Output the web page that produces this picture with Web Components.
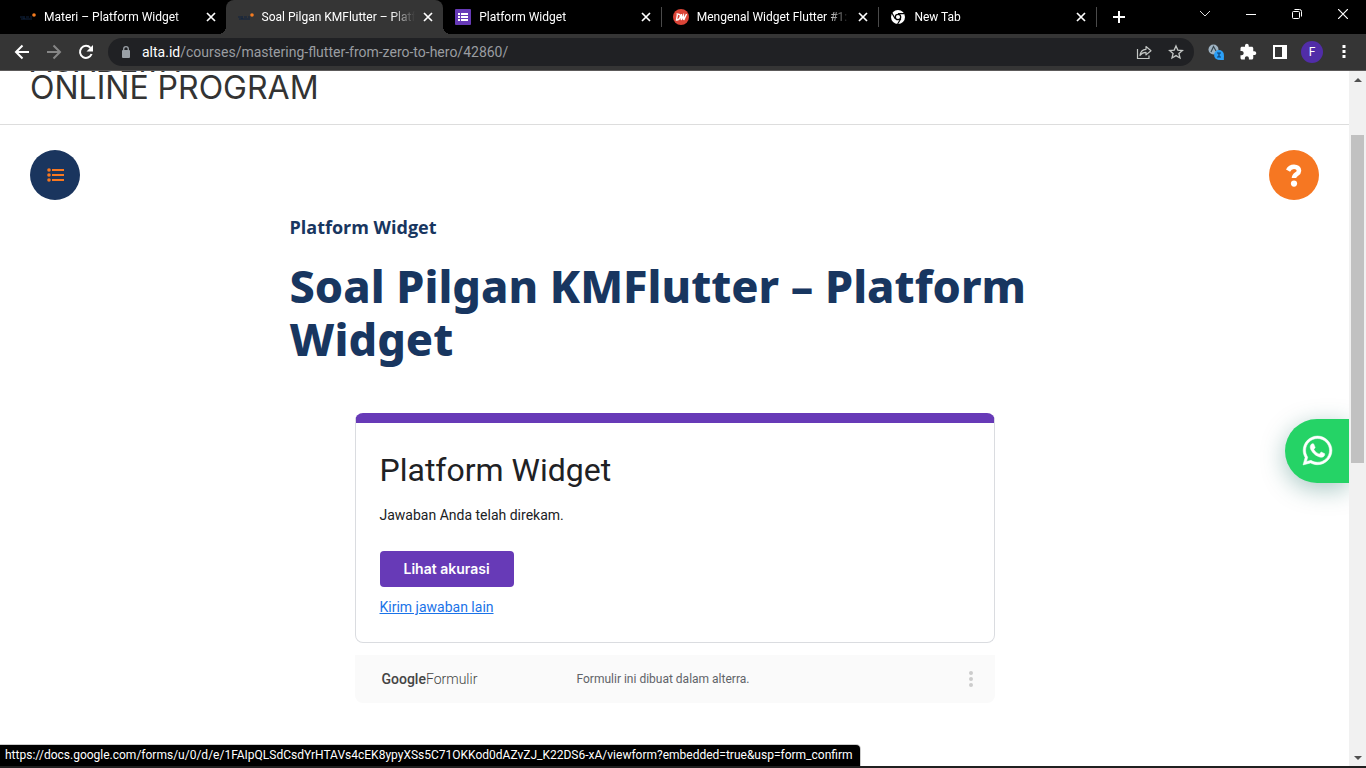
<!DOCTYPE html>
<html lang="id">
<head>
<meta charset="utf-8">
<title>Soal Pilgan KMFlutter – Platform Widget</title>
<style>
  html, body { margin: 0; height: 100%; overflow: hidden; }
  body { font-family: "Open Sans", "Noto Sans", sans-serif; background: #fff; }
</style>
</head>
<body>
<browser-window>
  <tab-strip slot="tabs">
    <browser-tab icon="alta">Materi – Platform Widget</browser-tab>
    <browser-tab icon="alta" active>Soal Pilgan KMFlutter – Platform Widget</browser-tab>
    <browser-tab icon="form">Platform Widget</browser-tab>
    <browser-tab icon="dw" divider>Mengenal Widget Flutter #1: Widget</browser-tab>
    <browser-tab icon="chrome" divider>New Tab</browser-tab>
  </tab-strip>
  <nav-bar slot="toolbar" host="alta.id" path="/courses/mastering-flutter-from-zero-to-hero/42860/"></nav-bar>
  <course-page>
    <span slot="brand">ACADEMY<br>ONLINE PROGRAM</span>
    <span slot="topic">Platform Widget</span>
    <span slot="title">Soal Pilgan KMFlutter – Platform Widget</span>
    <form-card heading="Platform Widget">Jawaban Anda telah direkam.</form-card>
    <form-footer>Formulir ini dibuat dalam alterra.</form-footer>
  </course-page>
  <chat-bubble slot="overlay"></chat-bubble>
  <status-bubble slot="overlay">https://docs.google.com/forms/u/0/d/e/1FAIpQLSdCsdYrHTAVs4cEK8ypyXSs5C71OKKod0dAZvZJ_K22DS6-xA/viewform?embedded=true&amp;usp=form_confirm</status-bubble>
  <scroll-bar slot="scroll"></scroll-bar>
</browser-window>

<script>
const ICONS = {
  alta: '<svg width="16" height="16" viewBox="0 0 16 16"><path d="M0 8h3M4 7v3M6 8h3M10 8h2M1 10h11" stroke="#10233f" stroke-width="1.2" fill="none"/><circle cx="14" cy="6" r="1.8" fill="#f57c20"/></svg>',
  form: '<svg width="16" height="16" viewBox="0 0 16 16"><rect width="16" height="16" rx="1" fill="#673ab7"/><path d="M3 4h2v2H3zM6 4h7v2H6zM3 7h2v2H3zM6 7h7v2H6zM3 10h2v2H3zM6 10h7v2H6z" fill="#fff"/></svg>',
  dw: '<svg width="16" height="16" viewBox="0 0 16 16"><circle cx="8" cy="8" r="8" fill="#db4437"/><path d="M4.500 5L3.500 11C6 11 7 9 7.300 7.500C7.500 5.500 6.500 5 3.500 5M8.500 5L8.300 11L10.500 6.500L10.800 11L13.500 5" stroke="#fff" stroke-width="1.400" fill="none"/></svg>',
  chrome: '<svg width="16" height="16" viewBox="0 0 16 16"><circle cx="8" cy="8" r="7" fill="#fff"/><circle cx="8" cy="8" r="2.700" fill="#fff" stroke="#000" stroke-width="1.300"/><path d="M8 4.700h6.500M5.200 9.700L1.900 4M10.800 9.700L7.600 15" stroke="#000" stroke-width="1.200"/></svg>',
  close: '<svg width="10" height="10" viewBox="0 0 10 10"><path d="M1 1l8 8M9 1l-8 8" stroke="currentColor" stroke-width="1.700"/></svg>',
  plus: '<svg width="14" height="14" viewBox="0 0 14 14"><path d="M7 1v12M1 7h12" stroke="#fff" stroke-width="2"/></svg>',
  chevron: '<svg width="12" height="12" viewBox="0 0 12 12"><path d="M1 3l5 5 5-5" stroke="#ddd" fill="none"/></svg>',
  minimise: '<svg width="10" height="10" viewBox="0 0 10 10"><path d="M0 5.500h10" stroke="#fff"/></svg>',
  restore: '<svg width="10" height="10" viewBox="0 0 10 10"><rect x=".5" y="2.500" width="7" height="7" rx="1" fill="none" stroke="#fff"/><path d="M2.500 .5H7.500Q9.500 .5 9.500 2.500V7.500" fill="none" stroke="#fff"/></svg>',
  shut: '<svg width="10" height="10" viewBox="0 0 10 10"><path d="M0 0l10 10M10 0L0 10" stroke="#fff" stroke-width="1.200"/></svg>',
  back: '<svg width="16" height="16" viewBox="0 0 16 16"><path d="M15 8H2M8.500 1.500L2 8l6.500 6.500" stroke="currentColor" stroke-width="2" fill="none"/></svg>',
  forward: '<svg width="16" height="16" viewBox="0 0 16 16"><path d="M1 8h13M7.500 1.500L14 8l-6.500 6.500" stroke="currentColor" stroke-width="2" fill="none"/></svg>',
  reload: '<svg width="16" height="16" viewBox="0 0 16 16"><path d="M13.600 10A6 6 0 1 1 12.500 3.900" stroke="currentColor" stroke-width="2" fill="none"/><path d="M15 1v6.500H8.500z" fill="currentColor"/></svg>',
  lock: '<svg width="10" height="12" viewBox="0 0 10 12"><rect x="1" y="4" width="8" height="8" rx="1" fill="#9aa0a6"/><path d="M2.700 4.500V3a2.300 2.300 0 0 1 4.600 0v1.500" stroke="#9aa0a6" stroke-width="1.300" fill="none"/></svg>',
  share: '<svg width="16" height="16" viewBox="0 0 16 16"><path d="M1.500 5v9.500h11.500V11.500" stroke="#c4c7c5" stroke-width="1.200" fill="none"/><path d="M4 11.500C4.500 7.500 7 5.500 10 5.300V2.500l5 4.200-5 4.200V8.300C7.500 8.300 5.500 9.300 4 11.500z" stroke="#c4c7c5" stroke-width="1.200" fill="none" stroke-linejoin="round"/></svg>',
  star: '<svg width="16" height="16" viewBox="0 0 16 16"><path d="M8 1.900l1.800 4.200 4.600.4-3.500 3 1.100 4.500L8 11.600 4 14l1.100-4.500-3.500-3 4.600-.4z" stroke="#c4c7c5" stroke-width="1.300" fill="none"/></svg>',
  translate: '<svg width="16" height="16" viewBox="0 0 16 16"><circle cx="5.500" cy="5.500" r="5" fill="#9fb3c2"/><path d="M3 8L5.500 2.500L8 7" stroke="#37474f" stroke-width="1.200" fill="none"/><circle cx="11" cy="11" r="4.900" fill="#2ba0f8"/><path d="M11 15.900h4.900v-4.900z" fill="#2ba0f8"/><path d="M9 9h4M9 13h4M11 9v4" stroke="#0d3f70" stroke-width="1.200"/></svg>',
  puzzle: '<svg width="18" height="18" viewBox="0 0 24 24"><path fill="#fff" d="M20.500 11H19V7c0-1.100-.9-2-2-2h-4V3.500C13 2.120 11.880 1 10.500 1S8 2.120 8 3.500V5H4c-1.100 0-2 .9-2 2v3.800h1.500c1.490 0 2.700 1.210 2.700 2.700s-1.210 2.700-2.700 2.700H2V20c0 1.100.9 2 2 2h3.800v-1.500c0-1.490 1.210-2.700 2.700-2.700s2.700 1.210 2.700 2.700V22H17c1.100 0 2-.9 2-2v-4h1.500c1.380 0 2.500-1.120 2.500-2.500S21.880 11 20.500 11z"/></svg>',
  panel: '<svg width="14" height="14" viewBox="0 0 14 14"><path fill="#fff" fill-rule="evenodd" d="M0 0h14v14H0zM2 2v10h7V2z"/></svg>',
  menu: '<svg width="4" height="14" viewBox="0 0 4 14"><path fill="#fff" d="M.5 0h3v3h-3zM.5 5h3v3h-3zM.5 10h3v3h-3z"/></svg>',
  list: '<svg width="17" height="14" viewBox="0 0 17 14"><path d="M5 2h12M5 7h12M5 12h12" stroke="#f97820" stroke-width="2"/><g fill="#f97820"><circle cx="2" cy="2" r="1.800"/><circle cx="2" cy="7" r="1.800"/><circle cx="2" cy="12" r="1.800"/></g></svg>',
  help: '<svg width="16" height="23" viewBox="0 0 16 23"><path d="M2 6.600C3.500 3.600 5.500 2.700 8 2.700c3 0 5 1.600 5 4 0 3.600-5 3.300-5 7.300" stroke="#fff" stroke-width="4.600" fill="none"/><circle cx="8" cy="19.600" r="3.100" fill="#fff"/></svg>',
  whatsapp: '<svg width="33" height="33" viewBox="0 0 448 512"><path fill="#fff" stroke="#fff" stroke-width="8" d="M380.900 97.100C339 55.100 283.200 32 223.900 32c-122.400 0-222 99.600-222 222 0 39.100 10.200 77.300 29.600 111L0 480l117.700-30.900c32.400 17.700 68.900 27 106.100 27h.1c122.300 0 224.100-99.600 224.100-222 0-59.300-25.200-115-67.100-157zm-157 341.600c-33.200 0-65.700-8.900-94-25.700l-6.700-4-69.800 18.300L72 359.200l-4.400-7c-18.500-29.400-28.200-63.300-28.200-98.200 0-101.700 82.800-184.500 184.600-184.500 49.300 0 95.600 19.200 130.400 54.100 34.800 34.900 56.200 81.200 56.100 130.500 0 101.800-84.900 184.600-186.600 184.600zm101.200-138.200c-5.500-2.800-32.800-16.200-37.900-18-5.100-1.900-8.800-2.800-12.500 2.800-3.700 5.600-14.300 18-17.600 21.800-3.200 3.700-6.500 4.200-12 1.400-32.600-16.300-54-29.100-75.500-66-5.700-9.800 5.700-9.100 16.300-30.300 1.800-3.700.9-6.900-.5-9.700-1.400-2.800-12.500-30.100-17.100-41.200-4.500-10.800-9.100-9.300-12.500-9.500-3.200-.2-6.900-.2-10.600-.2-3.700 0-9.700 1.400-14.800 6.900-5.100 5.600-19.400 19-19.400 46.300 0 27.300 19.900 53.700 22.600 57.400 2.800 3.700 39.100 59.700 94.800 83.800 35.200 15.200 49 16.500 66.600 13.900 10.700-1.600 32.800-13.400 37.400-26.400 4.600-13 4.600-24.100 3.200-26.400-1.300-2.500-5-3.900-10.500-6.600z"/></svg>',
  dots: '<svg width="6" height="18" viewBox="0 0 6 18"><g fill="#ccc"><circle cx="3" cy="3" r="2"/><circle cx="3" cy="9" r="2"/><circle cx="3" cy="15" r="2"/></g></svg>'
};
const RESET = `*{box-sizing:border-box}
  :host{box-sizing:border-box}
  svg{display:block;flex:none}
  button{margin:0;padding:0;border:0;background:none;font:inherit;color:inherit;display:grid;place-items:center}`;

function define(name, css, html) {
  customElements.define(name, class extends HTMLElement {
    connectedCallback() {
      if (this.shadowRoot) return;
      const markup = typeof html === 'function' ? html(this) : html;
      this.attachShadow({ mode: 'open' }).innerHTML = `<style>${RESET}${css}</style>${markup}`;
    }
  });
}

define('browser-window', `
  :host{display:flex;flex-direction:column;height:100vh;background:#fff}
  .view{flex:1;min-height:0;display:flex;position:relative;border-bottom:2px solid #202020}
  .content{flex:1;min-width:0;overflow:hidden;position:relative}
`, `<slot name="tabs"></slot><slot name="toolbar"></slot>
  <div class="view"><div class="content"><slot></slot><slot name="overlay"></slot></div><slot name="scroll"></slot></div>`);

define('tab-strip', `
  :host{display:flex;height:34px;background:#000;color:#fff;padding-left:8px}
  .tabs{display:flex;flex:0 1 1088px;min-width:0}
  .new{width:44px;height:34px}
  .controls{margin-left:auto;display:flex}
  .controls button{width:46px;height:28px}
  .end{width:1px;height:20px;margin-top:7px;background:#4a4a4a}
`, `<div class="tabs"><slot></slot></div><span class="end"></span>
  <button class="new" aria-label="New tab">${ICONS.plus}</button>
  <div class="controls">
    <button aria-label="Search tabs">${ICONS.chevron}</button>
    <button aria-label="Minimise">${ICONS.minimise}</button>
    <button aria-label="Restore">${ICONS.restore}</button>
    <button aria-label="Close">${ICONS.shut}</button>
  </div>`);

define('browser-tab', `
  :host{flex:1 1 0;min-width:0;height:34px;display:flex;align-items:center;padding:0 10px 0 12px;gap:8px;position:relative;font:12px/16px Roboto,sans-serif;color:#fff}
  :host([active]){background:#353535;border-radius:8px 8px 0 0}
  :host([active])::before,:host([active])::after{content:"";position:absolute;bottom:0;width:8px;height:8px}
  :host([active])::before{right:100%;background:radial-gradient(circle at 0 0,transparent 8px,#353535 8px)}
  :host([active])::after{left:100%;background:radial-gradient(circle at 100% 0,transparent 8px,#353535 8px)}
  :host([divider])::before{content:"";position:absolute;left:0;top:7px;height:20px;width:1px;background:#4a4a4a}
  .label{flex:1;min-width:0;overflow:hidden;white-space:nowrap;-webkit-mask-image:linear-gradient(90deg,#000 calc(100% - 24px),transparent);mask-image:linear-gradient(90deg,#000 calc(100% - 24px),transparent)}
`, el => `${ICONS[el.getAttribute('icon')]}<span class="label"><slot></slot></span><button aria-label="Close tab">${ICONS.close}</button>`);

define('nav-bar', `
  :host{display:flex;align-items:center;height:37px;padding:0 6px;background:#353535;border-bottom:1px solid #5c5a5a;color:#fff}
  button{width:32px;height:28px}
  .off{color:#868686}
  .omni{flex:1;min-width:0;display:flex;align-items:center;height:28px;margin:0 6px;padding:0 2px 0 13px;border-radius:14px;background:#202124}
  .url{flex:1;min-width:0;margin-left:11px;font:14px/18px Roboto,sans-serif;color:#9a9da1;white-space:nowrap;overflow:hidden}
  .url b{font-weight:400;color:#fff}
  .avatar{width:22px;height:22px;border-radius:50%;background:#512da8;display:grid;place-items:center;font:12px/22px Roboto,sans-serif}
`, el => `<button aria-label="Back">${ICONS.back}</button><button class="off" aria-label="Forward">${ICONS.forward}</button><button aria-label="Reload">${ICONS.reload}</button>
  <div class="omni">${ICONS.lock}<span class="url"><b>${el.getAttribute('host')}</b>${el.getAttribute('path')}</span>
  <button aria-label="Share">${ICONS.share}</button><button aria-label="Bookmark">${ICONS.star}</button></div>
  <button aria-label="Translate">${ICONS.translate}</button><button aria-label="Extensions">${ICONS.puzzle}</button><button aria-label="Side panel">${ICONS.panel}</button>
  <button aria-label="Profile"><span class="avatar">F</span></button><button aria-label="Menu">${ICONS.menu}</button>`);

define('course-page', `
  :host{display:block;color:#183660}
  header{height:54px;border-bottom:1px solid #ddd;padding:0 30px 23px;display:flex;align-items:flex-end;overflow:hidden}
  .brand{font:400 32px/27px Inter,Lato,sans-serif;color:#333;white-space:nowrap}
  .tools{display:flex;justify-content:space-between;padding:25px 30px 0}
  .tools button{width:50px;height:50px;border-radius:50%}
  .list{background:#1a355e}
  .help{background:#f67722}
  main{max-width:770px;margin:0 auto}
  p{margin:15px 0 0;font-size:18px;line-height:24px;font-weight:700}
  h1{margin:20px 0 48px;font:800 45px/53px "Noto Sans","Open Sans",sans-serif}
  .embed{max-width:640px;margin:0 auto;display:grid;gap:12px}
`, `<header><div class="brand"><slot name="brand"></slot></div></header>
  <div class="tools"><button class="list" aria-label="Daftar materi">${ICONS.list}</button><button class="help" aria-label="Bantuan">${ICONS.help}</button></div>
  <main><p><slot name="topic"></slot></p><h1><slot name="title"></slot></h1><div class="embed"><slot></slot></div></main>`);

define('form-card', `
  :host{display:block;border:1px solid #dadce0;border-top:10px solid #673ab7;border-radius:8px;background:#fff;padding:26px 24px 25px;font-family:Roboto,sans-serif;color:#202124}
  h2{margin:0;font-size:32px;line-height:42px;font-weight:400}
  p{margin:14px 0 0;font-size:14px;line-height:20px}
  button{margin-top:26px;height:36px;padding:0 24px;border-radius:4px;background:#673ab7;color:#fff;font:600 14px/18px Inter,sans-serif}
  a{display:inline-block;margin-top:10px;font-size:14px;line-height:20px;color:#1a73e8}
`, el => `<h2>${el.getAttribute('heading')}</h2><p><slot></slot></p><button>Lihat akurasi</button><a href="#">Kirim jawaban lain</a>`);

define('form-footer', `
  :host{display:grid;grid-template-columns:195px 1fr auto;align-items:center;height:48px;padding:0 21px 0 27px;background:#fafafa;border-radius:0 0 8px 8px;font:12px/16px Roboto,sans-serif;color:#5f6368}
  .logo{font-size:14px;color:#444}
  .logo b{font-weight:500}
  .logo span{font-weight:300}
`, `<span class="logo"><b>Google</b><span>Formulir</span></span><span><slot></slot></span><button aria-label="Opsi">${ICONS.dots}</button>`);

define('chat-bubble', `
  :host{position:absolute;right:0;top:50%;z-index:2}
  button{width:64px;height:64px;border-radius:32px 0 0 32px;background:#25d366;box-shadow:0 6px 24px rgba(7,94,84,.35)}
`, `<button aria-label="WhatsApp">${ICONS.whatsapp}</button>`);

define('status-bubble', `
  :host{position:absolute;left:0;bottom:0;z-index:3;height:21px;padding:0 7px 0 5px;background:#000;color:#fff;border-top-right-radius:4px;box-shadow:0 0 0 1px #ccc;font:12px/21px Roboto,sans-serif;white-space:nowrap}
`, `<slot></slot>`);

define('scroll-bar', `
  :host{display:flex;flex-direction:column;width:17px;background:#f1f1f1}
  i{height:17px;display:grid;place-items:center}
  .track{flex:1;display:grid;grid-template-rows:47fr 328fr 286fr;padding:0 2px}
  .thumb{grid-row:2;background:#c1c1c1}
`, `<i><svg width="8" height="4"><path d="M0 4l4-4 4 4z" fill="#505050"/></svg></i>
  <div class="track"><div class="thumb"></div></div>
  <i><svg width="8" height="4"><path d="M0 0l4 4 4-4z" fill="#505050"/></svg></i>`);
</script>
</body>
</html>
